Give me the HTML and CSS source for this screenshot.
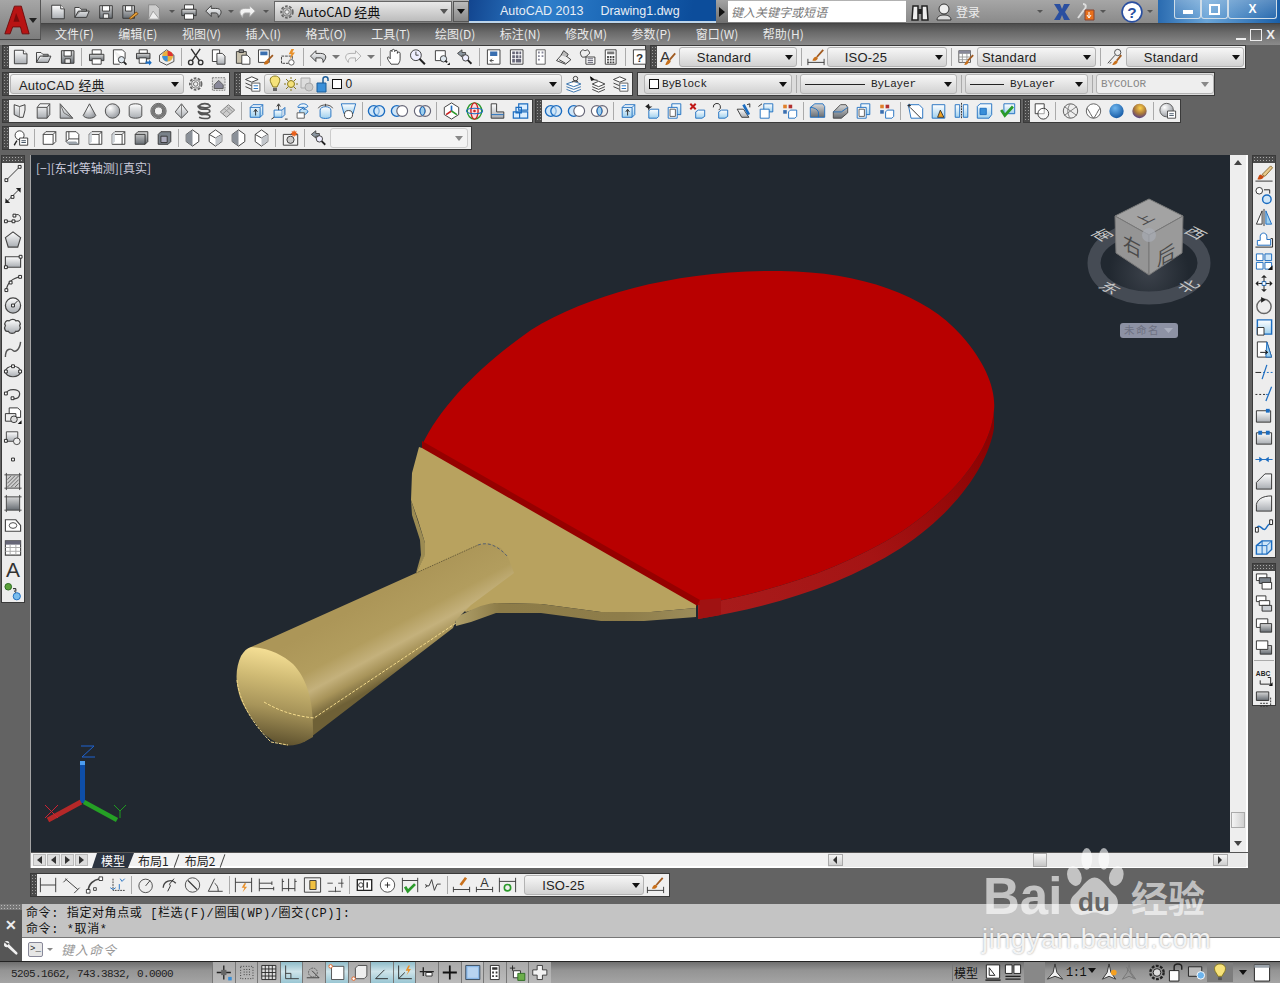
FILE: index.html
```html
<!DOCTYPE html>
<html lang="zh">
<head>
<meta charset="utf-8">
<title>AutoCAD 2013 - Drawing1.dwg</title>
<link rel="stylesheet" href="styles.css">
</head>
<body>
<svg class="defs" aria-hidden="true">
<defs>
<linearGradient id="gy" x1="0" y1="0" x2="0" y2="1"><stop offset="0" stop-color="#fff"/><stop offset="1" stop-color="#a9adb2"/></linearGradient>
<linearGradient id="gd" x1="0" y1="0" x2="0" y2="1"><stop offset="0" stop-color="#d8d8d8"/><stop offset="1" stop-color="#666c72"/></linearGradient>
<linearGradient id="gb" x1="0" y1="0" x2="0" y2="1"><stop offset="0" stop-color="#fff"/><stop offset="1" stop-color="#9fd0ee"/></linearGradient>
<radialGradient id="gs" cx=".35" cy=".3" r=".8"><stop offset="0" stop-color="#fff"/><stop offset="1" stop-color="#8f9399"/></radialGradient>
<radialGradient id="gbl" cx=".4" cy=".3" r=".8"><stop offset="0" stop-color="#6fb6ee"/><stop offset="1" stop-color="#0b4f9c"/></radialGradient>
<radialGradient id="gor" cx=".55" cy=".3" r=".8"><stop offset="0" stop-color="#ffd24a"/><stop offset=".5" stop-color="#a9783a"/><stop offset="1" stop-color="#3b2fa0"/></radialGradient>
<symbol id="new" viewBox="0 0 20 20"><path d="M3 2.5h10l4 4v11H3z" fill="url(#gy)" stroke="#333"/><path d="M13 2.500v4h4" fill="#fff" stroke="#333"/></symbol>
<symbol id="open" viewBox="0 0 20 20"><path d="M2 16V5h5l2 2h6v2H6L2 16h13l3-7H9" fill="url(#gy)" stroke="#333"/></symbol>
<symbol id="save" viewBox="0 0 20 20"><path d="M3 3h14v14H3z" fill="url(#gd)" stroke="#333"/><path d="M6 3h8v6H6z" fill="#fff" stroke="#333"/><path d="M7 12h6v5H7z" fill="#eee" stroke="#333"/></symbol>
<symbol id="saveas" viewBox="0 0 20 20"><path d="M2 3h13v14H2z" fill="url(#gd)" stroke="#333"/><path d="M5 3h7v6H5z" fill="#fff" stroke="#333"/><path d="M9 17l8-7 2 2-8 6z" fill="#e8a23a" stroke="#7a4a10"/></symbol>
<symbol id="sheet" viewBox="0 0 20 20"><path d="M4 2h8l4 4v12H4z" fill="#ccc" stroke="#888"/><path d="M4 18l5-9 7 9z" fill="#eee" stroke="#999"/></symbol>
<symbol id="print" viewBox="0 0 20 20"><path d="M5 2h10v5H5z" fill="#fff" stroke="#333"/><path d="M2 7h16v7H2z" fill="url(#gd)" stroke="#333"/><path d="M5 12h10v6H5z" fill="#fff" stroke="#333"/></symbol>
<symbol id="prev" viewBox="0 0 20 20"><path d="M3 2h10l3 3v7M3 2v16h7" fill="#fff" stroke="#333"/><circle cx="12" cy="13" r="3.500" fill="#dfe8ef" stroke="#333"/><path d="M14.500 15.500l3 3" stroke="#222" stroke-width="2"/></symbol>
<symbol id="pub" viewBox="0 0 20 20"><path d="M5 2h9v4H5z" fill="#fff" stroke="#333"/><path d="M2 6h15v6H2z" fill="url(#gd)" stroke="#333"/><path d="M5 11h8v6H5z" fill="#fff" stroke="#333"/><path d="M12 15h4v-2l3 3.500-3 3v-2h-4z" fill="#1b6cc0"/></symbol>
<symbol id="p3d" viewBox="0 0 20 20"><path d="M2 8l8-6 8 6v7l-8 4-8-4z" fill="#eee" stroke="#444"/><circle cx="11" cy="9" r="6" fill="#e8b040"/><path d="M11 3a6 6 0 0 1 6 6h-6z" fill="#d33"/><path d="M5 9a6 6 0 0 0 6 6V9z" fill="#3a8fd8"/></symbol>
<symbol id="cut" viewBox="0 0 20 20"><path d="M5 1l9 13M15 1L6 14" stroke="#333" stroke-width="1.600" fill="none"/><circle cx="4.500" cy="16" r="2.500" fill="none" stroke="#333" stroke-width="1.500"/><circle cx="15.500" cy="16" r="2.500" fill="none" stroke="#333" stroke-width="1.500"/></symbol>
<symbol id="copy" viewBox="0 0 20 20"><path d="M3 2h8v13H3z" fill="#fff" stroke="#333"/><path d="M8 6h6l3 3v9H8z" fill="url(#gy)" stroke="#333"/></symbol>
<symbol id="paste" viewBox="0 0 20 20"><path d="M3 4h11v13H3z" fill="#c9c2ae" stroke="#333"/><path d="M6 2h5v3H6z" fill="#888" stroke="#333"/><path d="M9 8h6l3 3v7H9z" fill="#fff" stroke="#333"/></symbol>
<symbol id="match" viewBox="0 0 20 20"><path d="M2 2h12v14H2z" fill="#fff" stroke="#333"/><path d="M4 4h8v4H4z" fill="#3a6fb0"/><path d="M18 8l-6 6" stroke="#a05a20" stroke-width="2"/><path d="M8 18c1-4 3-5 5-4l1 1c-1 3-3 4-6 3z" fill="#c8701c"/></symbol>
<symbol id="block" viewBox="0 0 20 20"><path d="M2 9h12v8H2z" fill="#eee" stroke="#333" stroke-dasharray="3 1"/><path d="M13 1l-3 6h3l-2 6 6-8h-3l2-4z" fill="#e8902a"/><circle cx="13" cy="16" r="3" fill="#fff" stroke="#555"/></symbol>
<symbol id="undo" viewBox="0 0 20 20"><path d="M8 3L2 9l6 6v-4h5c2 0 3 2 3 5 2-3 3-4 3-6 0-3-3-4-6-4H8z" fill="url(#gy)" stroke="#333"/></symbol>
<symbol id="redo" viewBox="0 0 20 20"><path d="M12 3l6 6-6 6v-4H7c-2 0-3 2-3 5-2-3-3-4-3-6 0-3 3-4 6-4h5z" fill="#f2f2f2" stroke="#aaa"/></symbol>
<symbol id="pan" viewBox="0 0 20 20"><path d="M6 18c-2-3-4-5-4-7s2-1 3 1V4c0-2 2-2 2 0V3c0-2 3-2 3 0v1c0-2 3-2 3 0v2c0-2 3-2 3 0v6c0 3-1 4-2 6z" fill="#fff" stroke="#333"/></symbol>
<symbol id="zrt" viewBox="0 0 20 20"><circle cx="8" cy="8" r="6" fill="#eef" stroke="#333"/><path d="M8 4v4h3" fill="none" stroke="#333"/><path d="M12 12l6 6" stroke="#222" stroke-width="2.200"/></symbol>
<symbol id="zw" viewBox="0 0 20 20"><path d="M3 3h11v11H3z" fill="#fff" stroke="#333"/><circle cx="12" cy="12" r="3.500" fill="#dfe8ef" stroke="#333"/><path d="M14 14l2 2" stroke="#222" stroke-width="2"/><path d="M16 19l3-3v3z" fill="#111"/></symbol>
<symbol id="zp" viewBox="0 0 20 20"><path d="M2 6l5-4v3h4v3H7v2z" fill="#8b96a0" stroke="#444"/><circle cx="11" cy="11" r="3.500" fill="#eef" stroke="#333"/><path d="M13.500 13.500l4 4" stroke="#222" stroke-width="2"/></symbol>
<symbol id="prop" viewBox="0 0 20 20"><path d="M3 2h14v16H3z" fill="#fff" stroke="#333"/><path d="M6 4h8v5H6z" fill="#3a6fb0"/><path d="M6 14h4M6 14l2-2M6 14l2 2" stroke="#333" fill="none"/></symbol>
<symbol id="grid" viewBox="0 0 20 20"><path d="M3 2h14v16H3z" fill="#fff" stroke="#333"/><path d="M5 4h3v3H5zM9 4h3v3H9zM13 4h2v3h-2zM5 8h3v3H5zM9 8h3v3H9zM13 8h2v3h-2zM9 12h6v4H9zM5 12h3v4H5z" fill="#667"/></symbol>
<symbol id="tp" viewBox="0 0 20 20"><path d="M5 2h10v16H5z" fill="#fff" stroke="#555"/><path d="M7 4h2v2H7zM11 4h2v2h-2zM7 8h2v2H7zM11 8h2v2h-2zM7 12h2v2H7z" fill="#889"/></symbol>
<symbol id="ssm" viewBox="0 0 20 20"><path d="M2 14l7-8 9 7-6 5z" fill="#eee" stroke="#333"/><path d="M5 13l7 4M7 8l3-5 5 4-2 3" fill="#bbb" stroke="#333"/></symbol>
<symbol id="mkup" viewBox="0 0 20 20"><path d="M3 3c2-2 3 0 4 0s3-2 4 0 2 3 0 4-2 3-4 3-3 1-4-1-2-4 0-6z" fill="#eee" stroke="#333"/><path d="M8 10h10v8H8z" fill="#fff" stroke="#333"/><path d="M10 12h6M10 14h6M10 16h6" stroke="#556"/></symbol>
<symbol id="calc" viewBox="0 0 20 20"><path d="M4 2h12v16H4z" fill="#fff" stroke="#333"/><path d="M6 4h8v3H6z" fill="#777"/><path d="M6 9h2v2H6zM9 9h2v2H9zM12 9h2v2h-2zM6 12h2v2H6zM9 12h2v2H9zM12 12h2v2h-2zM6 15h2v2H6zM9 15h2v2H9zM12 15h2v2h-2z" fill="#444"/></symbol>
<symbol id="help" viewBox="0 0 20 20"><path d="M3 2h14v16H3z" fill="#fff" stroke="#333"/><text x="10" y="15" font-size="13" font-weight="700" text-anchor="middle" font-family="Liberation Sans" fill="#333">?</text></symbol>
<symbol id="txt" viewBox="0 0 20 20"><text x="1" y="15" font-size="17" font-family="Liberation Sans" fill="#333">A</text><path d="M18 6l-6 7" stroke="#a05a20" stroke-width="2"/><path d="M7 19c1-4 3-6 5-6l1 1c0 3-3 5-6 5z" fill="#c8701c"/></symbol>
<symbol id="dims" viewBox="0 0 20 20"><path d="M1 12v7M19 12v7M1 16h18" stroke="#333" fill="none"/><path d="M18 2l-7 8" stroke="#a05a20" stroke-width="2"/><path d="M6 14c1-3 3-5 5-4l1 1c0 2-3 4-6 3z" fill="#c8701c"/></symbol>
<symbol id="tbl" viewBox="0 0 20 20"><path d="M2 3h13v13H2z" fill="#fff" stroke="#555"/><path d="M2 6h13M2 10h13M2 13h13M6 6v10M11 6v10" stroke="#999"/><path d="M2 3h13v3H2z" fill="#889"/><path d="M18 8l-6 6" stroke="#a05a20" stroke-width="2"/><path d="M8 19c1-3 3-5 4-5l1 1c0 2-2 4-5 4z" fill="#c8701c"/></symbol>
<symbol id="mld" viewBox="0 0 20 20"><circle cx="13" cy="5" r="3.500" fill="none" stroke="#444"/><path d="M10 8l-8 9M4 17l2-1" stroke="#444" fill="none"/><path d="M17 8l-5 6" stroke="#a05a20" stroke-width="2"/><path d="M7 19c1-3 3-5 5-5l1 1c0 2-3 4-6 4z" fill="#c8701c"/></symbol>
<symbol id="gear" viewBox="0 0 20 20"><circle cx="10" cy="10" r="6.500" fill="none" stroke="#666" stroke-width="2" stroke-dasharray="3 1.600"/><circle cx="10" cy="10" r="4.500" fill="none" stroke="#666"/><circle cx="10" cy="10" r="2.500" fill="#eee" stroke="#666"/></symbol>
<symbol id="wsl" viewBox="0 0 20 20"><path d="M3 3h14v14H3z" fill="#ddd" stroke="#777" stroke-dasharray="2 1"/><path d="M5 11l5-5 5 5v4H5z" fill="#889" stroke="#555"/></symbol>
<symbol id="lyr" viewBox="0 0 20 20"><path d="M2 5l7-3 7 3-7 3zM2 9l7 3M2 13l7 3" fill="#fff" stroke="#333"/><path d="M9 9h9v9H9z" fill="#fff" stroke="#555"/><path d="M11 12h5M11 15h5" stroke="#1b6cc0"/></symbol>
<symbol id="lyr2" viewBox="0 0 20 20"><path d="M2 10l8-3 8 3-8 3zM2 13l8 3 8-3M2 16l8 3 8-3" fill="#fff" stroke="#2a6aa8"/><circle cx="12" cy="4" r="2.500" fill="#eee" stroke="#333"/><path d="M8 8c1-2 6-2 7 0" fill="#888" stroke="#333"/></symbol>
<symbol id="lyr3" viewBox="0 0 20 20"><path d="M4 10l7-3 7 3-7 3zM4 13l7 3 7-3M4 16l7 3 7-3" fill="#fff" stroke="#333"/><path d="M2 2l4 3-3 1zM5 5l5 1" fill="#111" stroke="#111"/></symbol>
<symbol id="polys" viewBox="0 0 20 20"><path d="M3 3l6 2v12l-6-3z" fill="url(#gy)" stroke="#333"/><path d="M9 5l6-2v6l-2 8H9" fill="#eee" stroke="#333"/></symbol>
<symbol id="box" viewBox="0 0 20 20"><path d="M3 6l3-4h11v12l-3 4H3z" fill="url(#gy)" stroke="#444"/><path d="M3 6h11v12M14 6l3-4" fill="none" stroke="#444"/></symbol>
<symbol id="wedge" viewBox="0 0 20 20"><path d="M3 2v16h14z" fill="url(#gy)" stroke="#444"/><path d="M3 2l4 10 10 6" fill="none" stroke="#666"/></symbol>
<symbol id="cone" viewBox="0 0 20 20"><path d="M10 2L3 15c2 4 12 4 14 0z" fill="url(#gs)" stroke="#444"/></symbol>
<symbol id="sph" viewBox="0 0 20 20"><circle cx="10" cy="10" r="8" fill="url(#gs)" stroke="#444"/></symbol>
<symbol id="cyl" viewBox="0 0 20 20"><path d="M3 5c0-4 14-4 14 0v10c0 4-14 4-14 0z" fill="url(#gy)" stroke="#444"/></symbol>
<symbol id="tor" viewBox="0 0 20 20"><circle cx="10" cy="10" r="6.500" fill="none" stroke="#777" stroke-width="3"/><circle cx="10" cy="10" r="8.500" fill="none" stroke="#333" stroke-width=".8"/><circle cx="10" cy="10" r="4.500" fill="none" stroke="#333" stroke-width=".8"/></symbol>
<symbol id="pyr" viewBox="0 0 20 20"><path d="M10 2L3 11l7 7 7-7z" fill="url(#gy)" stroke="#444"/><path d="M10 2v16" stroke="#777"/></symbol>
<symbol id="hel" viewBox="0 0 20 20"><path d="M4 4c3-3 10-3 12 0s-9 3-12 1 0 3 3 3 9-1 9 2-10 3-12 1 0 3 3 3 9-1 9 2-8 3-12 1" fill="none" stroke="#555" stroke-width="1.800"/></symbol>
<symbol id="plane" viewBox="0 0 20 20"><path d="M2 11l9-8 7 6-9 8z" fill="#ccc" stroke="#777"/><path d="M6 7l7 6M9 5l7 6M5 13l8-7" stroke="#999" fill="none"/></symbol>
<symbol id="ext" viewBox="0 0 20 20"><path d="M3 6l3-3h11v11l-3 3H3z" fill="url(#gb)" stroke="#1b6cc0"/><path d="M3 6h11v11M14 6l3-3" fill="none" stroke="#1b6cc0"/><path d="M9 15V9M7 11l2-3 2 3" stroke="#222" fill="none"/></symbol>
<symbol id="pp" viewBox="0 0 20 20"><path d="M4 9h9v8H4z" fill="url(#gb)" stroke="#1b6cc0"/><path d="M13 9l3-3v8l-3 3" fill="#cde" stroke="#1b6cc0"/><path d="M9 9V3M7 5l2-3 2 3M1 19l3-2M16 19h3" stroke="#222" fill="none"/></symbol>
<symbol id="swp" viewBox="0 0 20 20"><path d="M5 5c2-4 10-4 11 0l-5 3c3 0 5 1 5 3l-3 3H7V9l5-3H5z" fill="url(#gb)" stroke="#1b6cc0"/><path d="M4 12h8v6H4z" fill="#fff" stroke="#555"/></symbol>
<symbol id="rev" viewBox="0 0 20 20"><path d="M4 9c0-5 12-5 12 0v7c0 3-12 3-12 0z" fill="url(#gb)" stroke="#1b6cc0"/><path d="M2 7c2-5 14-5 16 0M10 2v3" stroke="#444" fill="none"/></symbol>
<symbol id="loft" viewBox="0 0 20 20"><path d="M2 2h16l-3 11H5z" fill="url(#gb)" stroke="#1b6cc0"/><circle cx="10" cy="14" r="4.500" fill="#fff" stroke="#333"/></symbol>
<symbol id="u1" viewBox="0 0 20 20"><circle cx="7" cy="10" r="6" fill="#cfe6f8" stroke="#1b6cc0" stroke-width="1.500"/><circle cx="13" cy="10" r="6" fill="#cfe6f8" fill-opacity=".6" stroke="#1b6cc0" stroke-width="1.500"/></symbol>
<symbol id="u2" viewBox="0 0 20 20"><circle cx="7" cy="10" r="6" fill="#cfe6f8" stroke="#1b6cc0" stroke-width="1.500"/><circle cx="13" cy="10" r="6" fill="#fff" stroke="#667" stroke-width="1.300"/></symbol>
<symbol id="u3" viewBox="0 0 20 20"><circle cx="7" cy="10" r="6" fill="#fff" stroke="#667" stroke-width="1.300"/><circle cx="13" cy="10" r="6" fill="none" stroke="#667" stroke-width="1.300"/><path d="M10 5a6 6 0 0 1 0 10 6 6 0 0 1 0-10z" fill="#9fd0ee" stroke="#1b6cc0"/></symbol>
<symbol id="giz" viewBox="0 0 20 20"><path d="M10 1l8 5v8l-8 5-8-5V6z" fill="#fff" stroke="#333"/><path d="M10 10V4" stroke="#1b6cc0" stroke-width="1.800"/><path d="M10 10l-6 4" stroke="#c22" stroke-width="1.800"/><path d="M10 10l6 4" stroke="#2a9a2a" stroke-width="1.800"/></symbol>
<symbol id="orb" viewBox="0 0 20 20"><ellipse cx="10" cy="10" rx="8" ry="9" fill="none" stroke="#2a9a2a" stroke-width="1.500"/><ellipse cx="10" cy="10" rx="4" ry="9" fill="#fdd" stroke="#c22" stroke-width="1.500"/><ellipse cx="10" cy="10" rx="9" ry="3" fill="none" stroke="#1b6cc0" stroke-width="1.200"/><circle cx="10" cy="10" r="1.500" fill="#c22"/></symbol>
<symbol id="sec" viewBox="0 0 20 20"><path d="M3 2h6v9h8v7H3z" fill="url(#gy)" stroke="#333"/><path d="M3 14h14" stroke="#1b6cc0"/></symbol>
<symbol id="blu" viewBox="0 0 20 20"><path d="M8 2h10v7H8zM2 11h7v7H2zM9 11h9v7H9zM5 6h6v6H5z" fill="#dbeeff" stroke="#1b6cc0" stroke-width="1.300"/></symbol>
<symbol id="mv3" viewBox="0 0 20 20"><path d="M3 5l4-3 1 3 3 0-3 2-1 3-1-3z" fill="#222"/><path d="M7 10l2-2h9v8l-2 2H7z" fill="url(#gb)" stroke="#1b6cc0"/></symbol>
<symbol id="cp3" viewBox="0 0 20 20"><path d="M7 2h10v12H7z" fill="url(#gb)" stroke="#1b6cc0"/><path d="M3 6h10v12H3z" fill="#fff" stroke="#1b6cc0"/><path d="M5 8h6v8H5z" fill="#fff" stroke="#555"/></symbol>
<symbol id="er3" viewBox="0 0 20 20"><path d="M2 2l6 6M8 2L2 8" stroke="#c01818" stroke-width="2.200"/><path d="M8 11l3-2h7v7l-3 2H8z" fill="url(#gb)" stroke="#1b6cc0"/></symbol>
<symbol id="rt3" viewBox="0 0 20 20"><path d="M2 6a4 4 0 1 1 6 3" fill="none" stroke="#222"/><path d="M8 11l3-2h7v7l-3 2H8z" fill="url(#gb)" stroke="#1b6cc0"/></symbol>
<symbol id="sk3" viewBox="0 0 20 20"><path d="M3 8h7l6 9H8z" fill="url(#gy)" stroke="#333"/><path d="M10 3l6 11" stroke="#1b6cc0" stroke-width="3"/><path d="M14 3l3-1v4" stroke="#222" fill="none"/></symbol>
<symbol id="of3" viewBox="0 0 20 20"><path d="M7 2h10v9H7z" fill="url(#gb)" stroke="#1b6cc0"/><path d="M3 8h10v10H3z" fill="#fff" stroke="#1b6cc0"/><path d="M1 5l4-3" stroke="#222"/></symbol>
<symbol id="col3" viewBox="0 0 20 20"><path d="M3 3h4v4H3z" fill="#e0802a"/><path d="M9 3h4v4H9z" fill="#b03030"/><path d="M3 9h4v4H3z" fill="#3a6fb0"/><path d="M9 11l2-2h7v7l-2 2H9z" fill="#fff" stroke="#1b6cc0"/></symbol>
<symbol id="fil3" viewBox="0 0 20 20"><path d="M2 6l5-4h9l2 3v12H2z" fill="url(#gd)" stroke="#1b6cc0"/><path d="M2 6c4 0 8 2 9 5v6" fill="none" stroke="#1b6cc0"/></symbol>
<symbol id="cham3" viewBox="0 0 20 20"><path d="M2 11l8-8h6l2 3v6l-7 6H2z" fill="url(#gd)" stroke="#444"/><path d="M2 11h9l7-5" fill="none" stroke="#1b6cc0"/></symbol>
<symbol id="slc" viewBox="0 0 20 20"><path d="M2 3h12l4 4v11H5z" fill="#fff" stroke="#1b6cc0"/><path d="M4 6l12 12" stroke="#222"/><path d="M1 4h4M3 2v4" stroke="#222"/></symbol>
<symbol id="wr" viewBox="0 0 20 20"><path d="M3 3h14v15H3z" fill="url(#gb)" stroke="#1b6cc0"/><path d="M12 9l-3 8h7z" fill="#f0a020" stroke="#333"/></symbol>
<symbol id="sep3" viewBox="0 0 20 20"><path d="M3 3h5v14H3zM12 3h5v14h-5z" fill="url(#gb)" stroke="#1b6cc0"/><path d="M10 1v18" stroke="#222" stroke-dasharray="2 1"/></symbol>
<symbol id="she3" viewBox="0 0 20 20"><path d="M2 5l3-3h13v12l-3 4H2z" fill="url(#gb)" stroke="#1b6cc0"/><path d="M5 7h7v7H5z" fill="#3a8fd8" stroke="#1b6cc0"/></symbol>
<symbol id="chk3" viewBox="0 0 20 20"><path d="M6 2h12v11H6z" fill="url(#gb)" stroke="#1b6cc0"/><path d="M3 9l4 6 9-10" fill="none" stroke="#2a9a2a" stroke-width="3"/></symbol>
<symbol id="ovl" viewBox="0 0 20 20"><path d="M3 2h10v11H3z" fill="#fff" stroke="#333"/><circle cx="12" cy="13" r="6" fill="#fff" fill-opacity=".5" stroke="#333"/></symbol>
<symbol id="hid" viewBox="0 0 20 20"><circle cx="10" cy="10" r="8" fill="#eee" stroke="#555"/><path d="M3 5l14 10M17 5L3 15M10 2c-4 4-4 12 0 16" fill="none" stroke="#777"/></symbol>
<symbol id="hid2" viewBox="0 0 20 20"><circle cx="10" cy="10" r="8" fill="#fff" stroke="#555"/><path d="M3 7c3 4 4 8 7 11 3-3 4-7 7-11" fill="none" stroke="#555"/></symbol>
<symbol id="rbl" viewBox="0 0 20 20"><circle cx="10" cy="10" r="8" fill="url(#gbl)"/></symbol>
<symbol id="ror" viewBox="0 0 20 20"><circle cx="10" cy="10" r="8" fill="url(#gor)"/></symbol>
<symbol id="vsm" viewBox="0 0 20 20"><circle cx="9" cy="9" r="7.500" fill="url(#gs)" stroke="#555"/><path d="M10 10h9v8h-9z" fill="#fff" stroke="#444"/><path d="M12 13h5M12 15h5" stroke="#456"/></symbol>
<symbol id="lookup" viewBox="0 0 20 20"><circle cx="9" cy="7" r="5" fill="#fff" stroke="#333"/><path d="M6 13l-3 5M3 18l1-1" stroke="#222" stroke-width="1.500"/><path d="M9 10h9v8H9z" fill="#fff" stroke="#333"/><path d="M11 13h5M11 15h5" stroke="#345"/></symbol>
<symbol id="v1" viewBox="0 0 20 20"><path d="M3 6l3-3h11v11l-3 3H3z" fill="#fff" stroke="#333"/><path d="M3 6h11v11M14 6l3-3" fill="none" stroke="#333"/></symbol>
<symbol id="v2" viewBox="0 0 20 20"><path d="M3 3h11l3 3v11H6l-3-3z" fill="#fff" stroke="#333"/><path d="M3 14l3-3h11M6 11V3" fill="none" stroke="#333"/><path d="M3 14h11l3 3H6z" fill="#9ba3ab"/></symbol>
<symbol id="v3" viewBox="0 0 20 20"><path d="M6 3h11v14H3V6z" fill="#fff" stroke="#333"/><path d="M3 6h11v11M14 6l3-3" fill="none" stroke="#333"/><path d="M3 6l3-3v11l-3 3z" fill="#cfd4d9"/></symbol>
<symbol id="v4" viewBox="0 0 20 20"><path d="M3 6l3-3h11v11l-3 3H3z" fill="url(#gd)" stroke="#333"/><path d="M3 6h11v11" fill="none" stroke="#333"/></symbol>
<symbol id="v5" viewBox="0 0 20 20"><path d="M3 6l3-3h11v11l-3 3H3z" fill="#7a828a" stroke="#333"/><path d="M6 8h7v7H6z" fill="#aab" stroke="#333"/></symbol>
<symbol id="iso" viewBox="0 0 20 20"><path d="M10 1l7 5v8l-7 5-7-5V6z" fill="#fff" stroke="#333"/><path d="M10 1l-7 5 7 4zM10 10v9l-7-5V6z" fill="#8a9098"/></symbol>
<symbol id="iso2" viewBox="0 0 20 20"><path d="M10 1l7 5v8l-7 5-7-5V6z" fill="#fff" stroke="#333"/><path d="M3 6l7 4 7-4" fill="none" stroke="#333"/><path d="M10 10v9l7-5V6z" fill="#c2c6cb"/></symbol>
<symbol id="cam" viewBox="0 0 20 20"><path d="M2 6h16v12H2z" fill="#f2f2f2" stroke="#333"/><circle cx="10" cy="12" r="4" fill="#ccc" stroke="#333"/><path d="M14 1l1 2 2-1-1 2 2 1-2 1 1 2-2-1-1 2-1-2-2 1 1-2-2-1 2-1-1-2 2 1z" fill="#e8601c"/></symbol>
<symbol id="dl" viewBox="0 0 20 20"><path d="M1 2v16M18 2v16M1 10h17" stroke="#333" fill="none"/></symbol>
<symbol id="da" viewBox="0 0 20 20"><path d="M3 3L17 15M1 7l4-4M13 19l6-6" stroke="#333" fill="none"/></symbol>
<symbol id="darc" viewBox="0 0 20 20"><path d="M3 17C3 9 9 4 16 3" fill="none" stroke="#444" stroke-width="1.800"/><path d="M1 15h4v4H1zM15 1h4v4h-4zM9 13h3v3H9z" fill="#fff" stroke="#333"/></symbol>
<symbol id="dord" viewBox="0 0 20 20"><path d="M5 3v13h14" fill="none" stroke="#333" stroke-dasharray="2 1"/><path d="M2 13l3 2 3-2M13 3l2 3 3-3M12 15v-6" stroke="#1b6cc0" fill="none"/></symbol>
<symbol id="drad" viewBox="0 0 20 20"><circle cx="9" cy="11" r="7.500" fill="#eee" stroke="#444"/><path d="M9 11l5-6" stroke="#333"/></symbol>
<symbol id="djog" viewBox="0 0 20 20"><path d="M3 13A8 8 0 0 1 17 8" fill="none" stroke="#444" stroke-width="1.500"/><path d="M15 3l-5 6 1 2-3 6" stroke="#222" fill="none"/></symbol>
<symbol id="ddia" viewBox="0 0 20 20"><circle cx="10" cy="10" r="8" fill="#eee" stroke="#444"/><path d="M5 5l10 10" stroke="#333" stroke-width="1.200"/></symbol>
<symbol id="dang" viewBox="0 0 20 20"><path d="M2 17h16M2 17l7-14M13 17c0-4-1-7-4-9" fill="none" stroke="#333"/></symbol>
<symbol id="dq" viewBox="0 0 20 20"><path d="M1 2v16M19 2v16M1 7h18" stroke="#333" fill="none"/><path d="M11 8l-3 5h3l-2 5 5-6h-3l2-4z" fill="#e8902a"/></symbol>
<symbol id="dbase" viewBox="0 0 20 20"><path d="M2 3v14M2 8h14M2 14h16M16 6v4M18 12v4" stroke="#333" fill="none"/></symbol>
<symbol id="dcont" viewBox="0 0 20 20"><path d="M2 3v14M9 3v14M16 3v14M2 14h14M2 6h2M16 6h2" stroke="#333" fill="none"/></symbol>
<symbol id="dspc" viewBox="0 0 20 20"><path d="M1 2v16M19 2v16M1 2h18M1 18h18" stroke="#333" fill="none"/><path d="M7 5h7v10H7z" fill="#f0c040" stroke="#333"/></symbol>
<symbol id="dbrk" viewBox="0 0 20 20"><path d="M1 8h6M13 8h6M17 3v10M2 17h14M10 12v6" stroke="#444" fill="none"/></symbol>
<symbol id="dtol" viewBox="0 0 20 20"><path d="M2 4h16v12H2z" fill="#fff" stroke="#222" stroke-width="1.500"/><path d="M9 4v12" stroke="#222"/><circle cx="6" cy="10" r="2.500" fill="none" stroke="#222"/><path d="M13 7v6" stroke="#222" stroke-width="1.500"/></symbol>
<symbol id="dcen" viewBox="0 0 20 20"><circle cx="10" cy="10" r="8" fill="#fff" stroke="#444"/><path d="M7 10h6M10 7v6" stroke="#222"/></symbol>
<symbol id="dins" viewBox="0 0 20 20"><path d="M1 2v16M18 2v16M1 5h17" stroke="#333" fill="none"/><path d="M4 12l3 5 8-8" stroke="#2a9a2a" stroke-width="3" fill="none"/></symbol>
<symbol id="djl" viewBox="0 0 20 20"><path d="M1 11h4l3-7 3 12 3-7h4M1 9l2 2-2 2" fill="none" stroke="#333"/></symbol>
<symbol id="dedt" viewBox="0 0 20 20"><path d="M1 12v6M19 12v6M1 15h18" stroke="#333"/><path d="M15 2l-6 8" stroke="#c8701c" stroke-width="3"/></symbol>
<symbol id="dtxt" viewBox="0 0 20 20"><path d="M1 12v6M19 12v6M1 15h18" stroke="#333"/><text x="10" y="12" font-size="14" text-anchor="middle" font-family="Liberation Sans" fill="#333">A</text></symbol>
<symbol id="dupd" viewBox="0 0 20 20"><path d="M1 2v16M19 2v16M1 6h18" stroke="#333" fill="none"/><circle cx="10" cy="13" r="3.500" fill="none" stroke="#2a9a2a" stroke-width="1.800"/></symbol>
<symbol id="line" viewBox="0 0 20 20"><path d="M3 17L17 3" stroke="#333"/><path d="M1.500 15.500h3v3h-3zM15.500 1.500h3v3h-3z" fill="#fff" stroke="#222"/></symbol>
<symbol id="xl" viewBox="0 0 20 20"><path d="M2 18L18 2" stroke="#333"/><path d="M8 10h3v3H8z" fill="#fff" stroke="#222"/><path d="M2 18v-5l5 5zM18 2v5l-5-5z" fill="#222"/></symbol>
<symbol id="pl" viewBox="0 0 20 20"><path d="M3 14h11c4 0 5-3 3-6-2-2-4-1-6 0" fill="none" stroke="#333"/><path d="M1 12.500h3v3H1zM9 12.500h3v3H9zM10 6.500h3v3h-3z" fill="#fff" stroke="#222"/></symbol>
<symbol id="pgon" viewBox="0 0 20 20"><path d="M10 2l8 6-3 10H5L2 8z" fill="url(#gy)" stroke="#444" stroke-width="1.200"/></symbol>
<symbol id="rec" viewBox="0 0 20 20"><path d="M2 5h16v11H2z" fill="url(#gy)" stroke="#444" stroke-width="1.200"/><path d="M1 14.500h3v3H1zM16.500 3.500h3v3h-3z" fill="#fff" stroke="#222"/></symbol>
<symbol id="arc" viewBox="0 0 20 20"><path d="M3 17C4 9 10 4 18 3" fill="none" stroke="#444" stroke-width="1.300"/><path d="M1.500 15.500h3v3h-3zM6 7.500h3v3H6zM16 1.500h3v3h-3z" fill="#fff" stroke="#222"/></symbol>
<symbol id="cir" viewBox="0 0 20 20"><circle cx="10" cy="10" r="8" fill="url(#gy)" stroke="#444" stroke-width="1.300"/><path d="M10 10l5-5" stroke="#333"/><path d="M8.500 8.500h3v3h-3z" fill="#fff" stroke="#222"/></symbol>
<symbol id="cld" viewBox="0 0 20 20"><path d="M6 3c2-2 6-2 7 0 3-1 6 2 4 5 2 3-1 7-4 6-2 3-6 3-8 0-3 1-5-3-3-6-2-3 1-6 4-5z" fill="url(#gy)" stroke="#444" stroke-width="1.300"/></symbol>
<symbol id="spl" viewBox="0 0 20 20"><path d="M2 18C2 8 8 9 10 11s7 0 8-9" fill="none" stroke="#555" stroke-width="1.500"/></symbol>
<symbol id="ell" viewBox="0 0 20 20"><ellipse cx="10" cy="10" rx="8" ry="5.500" fill="url(#gy)" stroke="#444" stroke-width="1.200"/><path d="M1 8.500h3v3H1zM16 8.500h3v3h-3zM8.500 3h3v3h-3z" fill="#fff" stroke="#222"/></symbol>
<symbol id="ela" viewBox="0 0 20 20"><path d="M3 10c0-5 14-6 14 0s-6 6-8 5" fill="none" stroke="#444" stroke-width="1.300"/><path d="M1 8.500h3v3H1zM8 13.500h3v3H8z" fill="#fff" stroke="#222"/></symbol>
<symbol id="ins" viewBox="0 0 20 20"><path d="M6 2h9l3 3v7H6z" fill="#fff" stroke="#333"/><path d="M2 8h11v8H2z" fill="#eee" stroke="#333"/><circle cx="11" cy="14" r="3.500" fill="#ddd" stroke="#333"/><path d="M15 19l4-4v4z" fill="#111"/></symbol>
<symbol id="mkb" viewBox="0 0 20 20"><path d="M3 4h12v10H3z" fill="url(#gy)" stroke="#444"/><circle cx="14" cy="14" r="3.500" fill="#eee" stroke="#444"/><path d="M1 12h3v3H1z" fill="#fff" stroke="#222"/></symbol>
<symbol id="pt" viewBox="0 0 20 20"><path d="M8.500 8.500h3v3h-3z" fill="#fff" stroke="#222"/></symbol>
<symbol id="hat" viewBox="0 0 20 20"><path d="M3 3h14v14H3z" fill="#ccc"/><path d="M1 3h18M1 17h18M3 1v18M17 1v18" stroke="#444"/><path d="M4 8l4-4M4 12l8-8M4 16l12-12M8 16l8-8M12 16l4-4" stroke="#666"/></symbol>
<symbol id="gra" viewBox="0 0 20 20"><path d="M3 3h14v14H3z" fill="url(#gd)"/><path d="M1 3h18M1 17h18M3 1v18M17 1v18" stroke="#444"/></symbol>
<symbol id="regn" viewBox="0 0 20 20"><path d="M2 4h11l5 6v6H2z" fill="#fff" stroke="#444" stroke-width="1.200"/><ellipse cx="10" cy="10" rx="4" ry="3" fill="#fff" stroke="#444"/></symbol>
<symbol id="table" viewBox="0 0 20 20"><path d="M2 3h16v15H2z" fill="#fff" stroke="#444" stroke-width="1.200"/><path d="M2 3h16v4H2z" fill="#667"/><path d="M2 10h16M2 14h16M7 7v11M13 7v11" stroke="#aaa"/></symbol>
<symbol id="mtxt" viewBox="0 0 20 20"><text x="10" y="18" font-size="22" text-anchor="middle" font-family="Liberation Sans" fill="#333">A</text></symbol>
<symbol id="addsel" viewBox="0 0 20 20"><circle cx="5" cy="5" r="3.500" fill="#5aa03a" stroke="#2a6a20"/><circle cx="14" cy="15" r="3.800" fill="#7bbcec" stroke="#1b6cc0"/><path d="M10 7h3v3M11 9l2 2" stroke="#111" fill="none"/></symbol>
<symbol id="erase" viewBox="0 0 20 20"><path d="M17 2l2 2-8 9-3-2z" fill="#e8c88a" stroke="#8a6a30"/><path d="M6 11c-2 1-2 4-3 5 3 1 6 0 7-3z" fill="#c84a10"/><path d="M1 18h18" stroke="#333"/></symbol>
<symbol id="copy2" viewBox="0 0 20 20"><circle cx="5" cy="5" r="3.500" fill="#fff" stroke="#333"/><circle cx="13" cy="14" r="4.500" fill="#cfe6f8" stroke="#1b6cc0" stroke-width="1.500"/><path d="M10 4h6v4" stroke="#222" fill="none"/></symbol>
<symbol id="mir" viewBox="0 0 20 20"><path d="M8 3v14H2z" fill="#fff" stroke="#333"/><path d="M12 3v14h6z" fill="#9fd0ee" stroke="#1b6cc0"/><path d="M10 1v18" stroke="#333"/></symbol>
<symbol id="off" viewBox="0 0 20 20"><path d="M3 16V11h3V7c0-5 7-5 7 0v3h4v6z" fill="#fff" stroke="#1b6cc0"/><path d="M1 18h18V9h-2" fill="none" stroke="#222"/></symbol>
<symbol id="arr" viewBox="0 0 20 20"><path d="M2 2h7v7H2zM2 11h7v7H2z" fill="#fff" stroke="#1b6cc0"/><path d="M11 2h7v7h-7z" fill="#cfe6f8" stroke="#1b6cc0"/><path d="M11 11h7v7h-7z" fill="#fff" stroke="#1b6cc0"/><path d="M14 19l5-5v5z" fill="#111"/></symbol>
<symbol id="mov" viewBox="0 0 20 20"><path d="M10 1l3 3h-6zM10 19l-3-3h6zM1 10l3-3v6zM19 10l-3 3v-6z" fill="#222"/><path d="M8 8h4v4H8z" fill="#fff" stroke="#1b6cc0"/><path d="M4 10h4M12 10h4M10 4v4M10 12v4" stroke="#222"/></symbol>
<symbol id="rot" viewBox="0 0 20 20"><circle cx="10" cy="11" r="7.500" fill="none" stroke="#666" stroke-width="1.500"/><path d="M7 1l5 3-5 3z" fill="#222"/></symbol>
<symbol id="sca" viewBox="0 0 20 20"><path d="M3 2h15v15H3z" fill="url(#gb)" stroke="#1b6cc0" stroke-width="1.500"/><path d="M3 10h7v8H3z" fill="#fff" stroke="#333"/></symbol>
<symbol id="str" viewBox="0 0 20 20"><path d="M3 2h10l5 16H3z" fill="#fff" stroke="#333"/><path d="M13 2l5 16h-6z" fill="#9fd0ee" stroke="#1b6cc0"/><path d="M6 13h7M11 11l3 2-3 2" stroke="#111" fill="none"/></symbol>
<symbol id="trim" viewBox="0 0 20 20"><path d="M1 11h6" stroke="#222"/><path d="M9 11h2M13 11h2M17 11h2" stroke="#1b6cc0"/><path d="M8 18l5-15" stroke="#1b6cc0" stroke-width="1.300"/></symbol>
<symbol id="ext2" viewBox="0 0 20 20"><path d="M1 11h2M5 11h2M9 11h2" stroke="#222"/><path d="M12 11h2" stroke="#1b6cc0"/><path d="M12 18l6-15" stroke="#1b6cc0" stroke-width="1.300"/></symbol>
<symbol id="bk1" viewBox="0 0 20 20"><path d="M2 5h15v12H2z" fill="url(#gy)" stroke="#333"/><path d="M12 3h4v4h-4z" fill="#1b6cc0"/></symbol>
<symbol id="bk2" viewBox="0 0 20 20"><path d="M2 5h16v12H2z" fill="url(#gy)" stroke="#333"/><path d="M4 3h4v4H4zM12 3h4v4h-4z" fill="#1b6cc0"/></symbol>
<symbol id="join" viewBox="0 0 20 20"><path d="M1 10h18" stroke="#1b6cc0"/><path d="M5 7l4 3-4 3zM15 7l-4 3 4 3z" fill="#1b6cc0"/></symbol>
<symbol id="cha" viewBox="0 0 20 20"><path d="M2 11l9-9h7v16H2z" fill="url(#gy)" stroke="#333"/></symbol>
<symbol id="fil" viewBox="0 0 20 20"><path d="M2 11C3 6 8 2 18 2v16H2z" fill="url(#gy)" stroke="#333"/></symbol>
<symbol id="bln" viewBox="0 0 20 20"><path d="M2 14c3-9 7 4 10-1s3-4 6-6" fill="none" stroke="#1b6cc0" stroke-width="1.500"/><path d="M1 12h3v5H1zM16 4h3v5h-3z" fill="#fff" stroke="#222"/></symbol>
<symbol id="exp" viewBox="0 0 20 20"><path d="M2 8l6-5h10v9l-5 5H2z" fill="#cfe6f8" stroke="#1b6cc0" stroke-width="1.500"/><path d="M2 8h11v9M13 8l5-5M8 3v14" fill="none" stroke="#1b6cc0"/></symbol>
<symbol id="d1" viewBox="0 0 20 20"><path d="M2 2h11v7H2z" fill="#fff" stroke="#333"/><path d="M5 6h12v6H5z" fill="#7a828a" stroke="#333"/><path d="M8 11h10v7H8z" fill="#fff" stroke="#333"/></symbol>
<symbol id="d2" viewBox="0 0 20 20"><path d="M2 2h10v6H2z" fill="#fff" stroke="#333"/><path d="M5 7h11v5H5z" fill="#fff" stroke="#333"/><path d="M8 12h10v6H8z" fill="#c9cdd2" stroke="#333"/></symbol>
<symbol id="d3" viewBox="0 0 20 20"><path d="M2 3h12v9H2z" fill="#fff" stroke="#333"/><path d="M6 8h12v9H6z" fill="url(#gd)" stroke="#333"/></symbol>
<symbol id="d4" viewBox="0 0 20 20"><path d="M6 8h12v9H6z" fill="url(#gd)" stroke="#333"/><path d="M2 3h12v9H2z" fill="#fff" stroke="#333"/></symbol>
<symbol id="abc" viewBox="0 0 20 20"><text x="9" y="8" font-size="7" text-anchor="middle" font-family="Liberation Sans" font-weight="700" fill="#222">ABC</text><path d="M14 10h3v7H6v-4" fill="none" stroke="#222"/><path d="M15 19l4-4v4z" fill="#111"/></symbol>
<symbol id="drw" viewBox="0 0 20 20"><path d="M2 2h13v9H2z" fill="url(#gd)" stroke="#333"/><path d="M6 14h8M6 17h8M17 8v9" stroke="#333" stroke-dasharray="2 1"/></symbol>
</defs>
</svg>

<header class="titlebar">
  <div class="appbtn"><svg viewBox="0 0 30 34" class="applogo"><path d="M12 1h8l9 32h-8l-2-8H10l-3 8H1z" fill="#b81414" stroke="#6a0808"/><path d="M14 9l-3 10h7z" fill="#7a0c0c"/></svg><span class="appdd"></span></div>
  <div class="qat">
    <svg class="b"><use href="#new"/></svg><svg class="b"><use href="#open"/></svg><svg class="b"><use href="#save"/></svg><svg class="b"><use href="#saveas"/></svg><svg class="b"><use href="#sheet"/></svg><i class="dd gr"></i>
    <svg class="b"><use href="#print"/></svg><svg class="b"><use href="#undo"/></svg><i class="dd gr"></i><svg class="b"><use href="#redo"/></svg><i class="dd gr"></i>
  </div>
  <div class="wscombo"><svg class="wsgear"><use href="#gear"/></svg><span>AutoCAD 经典</span><i class="dd"></i></div>
  <div class="tarrow"><i class="dd bk"></i></div>
  <div class="glass"><span>AutoCAD 2013</span><span>Drawing1.dwg</span></div>
  <div class="tarrow2"></div>
  <div class="search">键入关键字或短语</div>
  <div class="infocenter">
    <svg class="ib" viewBox="0 0 20 20"><path d="M3 4h5v14H2zM12 4h5l1 14h-6z" fill="#eee" stroke="#222" stroke-width="1.500"/><path d="M8 7h4v5H8z" fill="#222"/></svg>
    <svg class="ib" viewBox="0 0 20 20"><circle cx="10" cy="7" r="5" fill="#eee" stroke="#333"/><path d="M3 18c0-4 4-5 7-5s7 1 7 5z" fill="#ddd" stroke="#333"/></svg>
    <span class="login">登录</span>
    <i class="dd gr d1"></i>
    <svg class="ib x1" viewBox="0 0 20 20"><path d="M2 2h6l2 5 2-5h6l-5 8 5 8h-6l-2-5-2 5H2l5-8z" fill="#2a4fa0"/></svg>
    <svg class="ib" viewBox="0 0 20 20"><path d="M7 2c3 0 4 3 1 6l-6 8" fill="none" stroke="#ddd" stroke-width="2"/><path d="M9 8h9v10H9z" fill="#e8701c" stroke="#843"/><path d="M13 10v5M11 13l2 3 2-3" stroke="#fff" fill="none"/></svg>
    <i class="dd gr"></i>
    <svg class="ib hp" viewBox="0 0 20 20"><circle cx="10" cy="10" r="9" fill="#fff" stroke="#2a4fa0" stroke-width="1.500"/><text x="10" y="15" font-size="14" font-weight="700" text-anchor="middle" font-family="Liberation Sans" fill="#2a4fa0">?</text></svg>
    <i class="dd gr"></i>
  </div>
  <div class="winctl"><b class="wb"><i class="wmin"></i></b><b class="wb"><i class="wmax"></i></b><b class="wb wx">X</b></div>
</header>

<nav class="menubar">
  <span>文件(F)</span><span>编辑(E)</span><span>视图(V)</span><span>插入(I)</span><span>格式(O)</span><span>工具(T)</span><span>绘图(D)</span><span>标注(N)</span><span>修改(M)</span><span>参数(P)</span><span>窗口(W)</span><span>帮助(H)</span>
  <div class="mdi"><i class="mmin"></i><i class="mmax"></i><b>X</b></div>
</nav>

<section class="rows">
  <div class="row">
    <div class="tb w644">
      <svg class="b"><use href="#new"/></svg><svg class="b"><use href="#open"/></svg><svg class="b"><use href="#save"/></svg><u></u>
      <svg class="b"><use href="#print"/></svg><svg class="b"><use href="#prev"/></svg><svg class="b"><use href="#pub"/></svg><svg class="b"><use href="#p3d"/></svg><u></u>
      <svg class="b"><use href="#cut"/></svg><svg class="b"><use href="#copy"/></svg><svg class="b"><use href="#paste"/></svg><svg class="b"><use href="#match"/></svg><svg class="b"><use href="#block"/></svg><u></u>
      <svg class="b"><use href="#undo"/></svg><i class="dd sm"></i><svg class="b"><use href="#redo"/></svg><i class="dd sm gr"></i><u></u>
      <svg class="b"><use href="#pan"/></svg><svg class="b"><use href="#zrt"/></svg><svg class="b"><use href="#zw"/></svg><svg class="b"><use href="#zp"/></svg><u></u>
      <svg class="b"><use href="#prop"/></svg><svg class="b"><use href="#grid"/></svg><svg class="b"><use href="#tp"/></svg><svg class="b"><use href="#ssm"/></svg><svg class="b"><use href="#mkup"/></svg><svg class="b"><use href="#calc"/></svg><u></u>
      <svg class="b"><use href="#help"/></svg>
    </div>
    <div class="tb w596 cmbs">
      <svg class="b"><use href="#txt"/></svg><div class="cb c118 ctr">Standard<i class="dd"></i></div>
      <u></u><svg class="b"><use href="#dims"/></svg><div class="cb c120 ctr isoc">ISO-25<i class="dd"></i></div>
      <u></u><svg class="b"><use href="#tbl"/></svg><div class="cb c119">Standard<i class="dd"></i></div>
      <u></u><svg class="b"><use href="#mld"/></svg><div class="cb c118 ctr">Standard<i class="dd"></i></div>
    </div>
  </div>
  <div class="row">
    <div class="tb w228">
      <div class="cb c174">AutoCAD 经典<i class="dd"></i></div>
      <svg class="b"><use href="#gear"/></svg><svg class="b"><use href="#wsl"/></svg>
    </div>
    <div class="tb w399">
      <svg class="b"><use href="#lyr"/></svg>
      <div class="cb c298 lay">
        <svg class="s" viewBox="0 0 14 18"><path d="M7 1c4 0 6 3 4 7l-2 4H5L3 8C1 4 3 1 7 1z" fill="#f5e27a" stroke="#887a20"/><path d="M5 13h4v3H5z" fill="#666"/></svg>
        <svg class="s" viewBox="0 0 14 18"><circle cx="7" cy="9" r="3.500" fill="#f5e27a" stroke="#887a20"/><path d="M7 2v2M7 14v2M0 9h2M12 9h2M2 4l2 2M10 12l2 2M12 4l-2 2M2 14l2-2" stroke="#887a20"/></svg>
        <svg class="s" viewBox="0 0 14 18"><path d="M1 3h9v10H1z" fill="#ddd" stroke="#aaa"/><circle cx="9" cy="12" r="4" fill="#ccc" stroke="#aaa"/></svg>
        <svg class="s" viewBox="0 0 14 18"><path d="M1 8h9v9H1z" fill="#3a8fd8" stroke="#1b5c98"/><path d="M7 8V4c0-3 5-3 5 0v2" fill="none" stroke="#1b5c98" stroke-width="1.500"/></svg>
        <i class="sw"></i><span>0</span><i class="dd"></i>
      </div>
      <svg class="b"><use href="#lyr2"/></svg><svg class="b"><use href="#lyr3"/></svg><svg class="b"><use href="#lyr"/></svg>
    </div>
    <div class="tb w574 nohandle cprops">
      <div class="cb c148 ser"><i class="sw sm2"></i>ByBlock<i class="dd"></i></div><u></u>
      <div class="cb c157 ser"><i class="lt lt1"></i>ByLayer<i class="dd"></i></div><u></u>
      <div class="cb c123 ser"><i class="lt lt2"></i>ByLayer<i class="dd"></i></div><u></u>
      <div class="cb c118 ser dis">BYCOLOR<i class="dd gr"></i></div>
    </div>
  </div>
  <div class="row r3">
    <div class="tb w531">
      <svg class="b"><use href="#polys"/></svg><svg class="b"><use href="#box"/></svg><svg class="b"><use href="#wedge"/></svg><svg class="b"><use href="#cone"/></svg><svg class="b"><use href="#sph"/></svg><svg class="b"><use href="#cyl"/></svg><svg class="b"><use href="#tor"/></svg><svg class="b"><use href="#pyr"/></svg><svg class="b"><use href="#hel"/></svg><svg class="b"><use href="#plane"/></svg><u></u>
      <svg class="b"><use href="#ext"/></svg><svg class="b"><use href="#pp"/></svg><svg class="b"><use href="#swp"/></svg><svg class="b"><use href="#rev"/></svg><svg class="b"><use href="#loft"/></svg><u></u>
      <svg class="b"><use href="#u1"/></svg><svg class="b"><use href="#u2"/></svg><svg class="b"><use href="#u3"/></svg><u></u>
      <svg class="b"><use href="#giz"/></svg><svg class="b"><use href="#orb"/></svg><svg class="b"><use href="#sec"/></svg><svg class="b"><use href="#blu"/></svg>
    </div>
    <div class="tb w486">
      <svg class="b"><use href="#u1"/></svg><svg class="b"><use href="#u2"/></svg><svg class="b"><use href="#u3"/></svg><u></u>
      <svg class="b"><use href="#ext"/></svg><svg class="b"><use href="#mv3"/></svg><svg class="b"><use href="#cp3"/></svg><svg class="b"><use href="#er3"/></svg><svg class="b"><use href="#rt3"/></svg><svg class="b"><use href="#sk3"/></svg><svg class="b"><use href="#of3"/></svg><svg class="b"><use href="#col3"/></svg><u></u>
      <svg class="b"><use href="#fil3"/></svg><svg class="b"><use href="#cham3"/></svg><svg class="b"><use href="#cp3"/></svg><svg class="b"><use href="#col3"/></svg><u></u>
      <svg class="b"><use href="#slc"/></svg><svg class="b"><use href="#wr"/></svg><svg class="b"><use href="#sep3"/></svg><svg class="b"><use href="#she3"/></svg><svg class="b"><use href="#chk3"/></svg>
    </div>
    <div class="tb w158">
      <svg class="b"><use href="#ovl"/></svg><u></u><svg class="b"><use href="#hid"/></svg><svg class="b"><use href="#hid2"/></svg><svg class="b"><use href="#rbl"/></svg><svg class="b"><use href="#ror"/></svg><u></u><svg class="b"><use href="#vsm"/></svg>
    </div>
  </div>
  <div class="row r3">
    <div class="tb w470">
      <svg class="b"><use href="#lookup"/></svg><u></u>
      <svg class="b"><use href="#v1"/></svg><svg class="b"><use href="#v2"/></svg><svg class="b"><use href="#v3"/></svg><svg class="b"><use href="#v3"/></svg><svg class="b"><use href="#v4"/></svg><svg class="b"><use href="#v5"/></svg><u></u>
      <svg class="b"><use href="#iso"/></svg><svg class="b"><use href="#iso2"/></svg><svg class="b"><use href="#iso"/></svg><svg class="b"><use href="#iso2"/></svg><u></u>
      <svg class="b"><use href="#cam"/></svg><u></u><svg class="b"><use href="#zp"/></svg>
      <div class="cb c138 flat"><i class="dd gr"></i></div>
    </div>
  </div>
</section>

<main class="main">
  <aside class="vt vtl">
    <svg class="b"><use href="#line"/></svg><svg class="b"><use href="#xl"/></svg><svg class="b"><use href="#pl"/></svg><svg class="b"><use href="#pgon"/></svg><svg class="b"><use href="#rec"/></svg><svg class="b"><use href="#arc"/></svg><svg class="b"><use href="#cir"/></svg><svg class="b"><use href="#cld"/></svg><svg class="b"><use href="#spl"/></svg><svg class="b"><use href="#ell"/></svg><svg class="b"><use href="#ela"/></svg><svg class="b"><use href="#ins"/></svg><svg class="b"><use href="#mkb"/></svg><svg class="b"><use href="#pt"/></svg><svg class="b"><use href="#hat"/></svg><svg class="b"><use href="#gra"/></svg><svg class="b"><use href="#regn"/></svg><svg class="b"><use href="#table"/></svg><svg class="b"><use href="#mtxt"/></svg><svg class="b"><use href="#addsel"/></svg>
  </aside>
  <div class="center">
    <div class="viewrow">
      <svg class="canvas" viewBox="30 155 1199 697">
        <defs>
          <linearGradient id="rim" gradientUnits="userSpaceOnUse" x1="697" y1="610" x2="993" y2="420"><stop offset="0" stop-color="#a81c1c"/><stop offset=".5" stop-color="#a51414"/><stop offset="1" stop-color="#8a0000"/></linearGradient>
          <linearGradient id="hdl" gradientUnits="userSpaceOnUse" x1="345" y1="612" x2="395" y2="705"><stop offset="0" stop-color="#ac9658"/><stop offset=".33" stop-color="#b29d5e"/><stop offset=".5" stop-color="#c4b17c"/><stop offset=".62" stop-color="#a8945a"/><stop offset=".76" stop-color="#6e6036"/></linearGradient>
          <linearGradient id="capg" gradientUnits="userSpaceOnUse" x1="278" y1="650" x2="262" y2="745"><stop offset="0" stop-color="#f6e096"/><stop offset=".3" stop-color="#cfba74"/><stop offset=".6" stop-color="#a8955a"/><stop offset="1" stop-color="#574b2a"/></linearGradient>
          <linearGradient id="edge" gradientUnits="userSpaceOnUse" x1="455" y1="615" x2="695" y2="615"><stop offset="0" stop-color="#b0a06a"/><stop offset=".18" stop-color="#8d7c48"/><stop offset=".7" stop-color="#8e7d4a"/><stop offset="1" stop-color="#9c8c5a"/></linearGradient>
          <radialGradient id="vg" gradientUnits="userSpaceOnUse" cx="1148" cy="272" r="40"><stop offset="0" stop-color="#3c424b"/><stop offset="1" stop-color="#212830"/></radialGradient>
        </defs>
        <text x="35" y="173" class="vlabel">[−][东北等轴测][真实]</text>
        <path d="M697 605C770 592 840 570 900 532 955 495 990 450 993 410L993 428C988 462 958 510 900 548 840 586 770 607 697 619Z" fill="url(#rim)"/>
        <path d="M421 445C440 405 480 365 530 330 590 293 680 270 780 271 860 272 925 295 960 335 985 363 995 390 993 410 990 450 955 495 900 532 840 570 770 592 697 605Z" fill="#b80000"/>
        <path d="M421 441L699 600 695 607 421 449Z" fill="#960000"/>
        <path d="M699 600L720 598V615L697 619Z" fill="#a01212"/>
        <path d="M410 500L424 543 424 556 415 573 420 555 419 540 411 515Z" fill="#9c8b52"/>
        <path d="M418 447L421 448 695 605V608L650 612 600 612 540 604 495 603 465 612 415 573 424 555 424 543 417 520 410 500 411 473Z" fill="#b8a25f"/>
        <path d="M454 618C470 610 480 604 495 603L540 604 600 612 650 612 695 608V617L643 621 600 621 540 613 495 613 470 622 455 626Z" fill="url(#edge)"/>
        <path d="M250 647L415 573 477 545 488 543 500 548 507 557 513 573 470 605 455 620 452 628 310 737 303 742 270 700Z" fill="url(#hdl)"/>
        <path d="M250 647C268 648 282 655 292 664 305 678 313 698 312 737L303 742C295 746 285 747 277 743 268 739 262 733 258 728 248 714 240 705 237 690 234 675 236 665 240 656 243 651 246 648 250 647Z" fill="url(#capg)"/>
        <path d="M263 702C280 712 295 716 313 718L455 623" fill="none" stroke="#f5dc8c" stroke-dasharray="3 1.500"/>
        <path d="M415 573L477 545" fill="none" stroke="#6a5e3a" stroke-dasharray="1.500 1"/>
        <path d="M477 545C488 541 498 547 507 557" fill="none" stroke="#556070" stroke-dasharray="3 2"/>
        <path d="M236 680C238 700 250 722 270 742L287 745" fill="none" stroke="#f0d78a" stroke-dasharray="3 1"/>
        <ellipse cx="1148" cy="263" rx="55" ry="35" fill="url(#vg)" stroke="#454b54" stroke-width="13"/>
        <path d="M1148 199L1182 216 1148 235 1114 216Z" fill="#a3a3a3" stroke="#7a7a7a"/>
        <path d="M1114 216L1148 235V275L1115 253Z" fill="#959595" stroke="#777"/>
        <path d="M1182 216L1148 235V275L1181 253Z" fill="#9a9a9a" stroke="#777"/>
        <circle cx="1148" cy="235" r="7" fill="#a8adb5" opacity=".7"/>
        <text class="cube" transform="matrix(.9 -.45 .9 .45 1148 222)" text-anchor="middle">上</text>
        <text class="cube big" transform="matrix(.95 .5 0 1 1131 253)" text-anchor="middle">右</text>
        <text class="cube big" transform="matrix(.95 -.5 0 1 1165 262)" text-anchor="middle">后</text>
        <text class="ringt" transform="matrix(1 .5 -.8 .5 1104 291)" text-anchor="middle">东</text>
        <text class="ringt" transform="matrix(1 -.5 .8 .5 1192 289)" text-anchor="middle">北</text>
        <text class="ringt" transform="matrix(1 -.5 .8 .5 1106 238)" text-anchor="middle">南</text>
        <text class="ringt" transform="matrix(1 .5 -.8 .5 1190 236)" text-anchor="middle">西</text>
        <rect x="1119" y="323" width="58" height="15" rx="3" fill="#8d92a4"/>
        <text x="1123" y="334" class="unnamed">未命名</text>
        <path d="M1163 328h9l-4.500 5z" fill="#a9aebd"/>
        <path d="M80 746h13L81 757h13" fill="none" stroke="#1f63d0"/>
        <path d="M81.500 761V803" stroke="#0e4ea8" stroke-width="5"/>
        <path d="M80 802L47 820" stroke="#b52828" stroke-width="5"/>
        <path d="M83 802L116 820" stroke="#25a025" stroke-width="4.500"/>
        <path d="M79 761h5v4h-5z" fill="#4d9df0"/>
        <path d="M44 805l13 13M57 805l-13 13" stroke="#c23" fill="none"/>
        <path d="M113 805l6 6 6-6M119 811v7" stroke="#1f9a1f" fill="none"/>
      </svg>
      <div class="vscroll"><i class="tri up"></i><i class="vthumb"></i><i class="tri dn"></i></div>
    </div>
    <div class="tabbar">
      <div class="nav"><i class="na l1"></i><i class="na l2"></i><i class="na r2"></i><i class="na r1"></i></div>
      <span class="tab on">模型</span><span class="tab">布局1</span><span class="tab">布局2</span>
      <div class="hs"><i class="hbtn l"></i><i class="hthumb"></i><i class="hbtn r"></i></div>
    </div>
  </div>
  <aside class="rcol">
    <div class="vt vtr1">
      <svg class="b"><use href="#erase"/></svg><svg class="b"><use href="#copy2"/></svg><svg class="b"><use href="#mir"/></svg><svg class="b"><use href="#off"/></svg><svg class="b"><use href="#arr"/></svg><svg class="b"><use href="#mov"/></svg><svg class="b"><use href="#rot"/></svg><svg class="b"><use href="#sca"/></svg><svg class="b"><use href="#str"/></svg><svg class="b"><use href="#trim"/></svg><svg class="b"><use href="#ext2"/></svg><svg class="b"><use href="#bk1"/></svg><svg class="b"><use href="#bk2"/></svg><svg class="b"><use href="#join"/></svg><svg class="b"><use href="#cha"/></svg><svg class="b"><use href="#fil"/></svg><svg class="b"><use href="#bln"/></svg><svg class="b"><use href="#exp"/></svg>
    </div>
    <div class="vt vtr2">
      <svg class="b"><use href="#d1"/></svg><svg class="b"><use href="#d2"/></svg><svg class="b"><use href="#d3"/></svg><svg class="b"><use href="#d4"/></svg><hr>
      <svg class="b"><use href="#abc"/></svg><svg class="b"><use href="#drw"/></svg>
    </div>
  </aside>
</main>

<section class="dimrow">
  <div class="tb w640">
    <svg class="b"><use href="#dl"/></svg><svg class="b"><use href="#da"/></svg><svg class="b"><use href="#darc"/></svg><svg class="b"><use href="#dord"/></svg><u></u>
    <svg class="b"><use href="#drad"/></svg><svg class="b"><use href="#djog"/></svg><svg class="b"><use href="#ddia"/></svg><svg class="b"><use href="#dang"/></svg><u></u>
    <svg class="b"><use href="#dq"/></svg><svg class="b"><use href="#dbase"/></svg><svg class="b"><use href="#dcont"/></svg><svg class="b"><use href="#dspc"/></svg><svg class="b"><use href="#dbrk"/></svg><u></u>
    <svg class="b"><use href="#dtol"/></svg><svg class="b"><use href="#dcen"/></svg><svg class="b"><use href="#dins"/></svg><svg class="b"><use href="#djl"/></svg><u></u>
    <svg class="b"><use href="#dedt"/></svg><svg class="b"><use href="#dtxt"/></svg><svg class="b"><use href="#dupd"/></svg>
    <div class="cb c120 ctr isoc">ISO-25<i class="dd"></i></div>
    <svg class="b"><use href="#dims"/></svg>
  </div>
</section>

<section class="cmd">
  <div class="cmdside"><i class="cdots"></i><b>✕</b><svg viewBox="0 0 20 20" class="wrench"><path d="M3 3c3-2 6 0 5 3l9 9c1 2-1 3-2 2L6 9C3 10 1 7 3 4l3 3 2-2z" fill="#f0f0f0"/></svg></div>
  <div class="cmdmain">
    <div class="cmdlog"><p>命令: 指定对角点或 [栏选(F)/圈围(WP)/圈交(CP)]:</p><p>命令: *取消*</p></div>
    <div class="cmdin"><span class="prompt">&gt;_</span><i class="dd gr"></i><em>键入命令</em></div>
  </div>
</section>

<footer class="status">
  <span class="coords">5205.1662, 743.3832, 0.0000</span>
  <div class="sbs">
    <svg class="sb" viewBox="0 0 20 20"><path d="M10 2v16M2 10h16" stroke="#222" stroke-width="1.500"/><path d="M7 7h6v6H7z" fill="#666"/><path d="M15 15h4v4h-4z" fill="#3a8fd8"/></svg>
    <svg class="sb" viewBox="0 0 20 20"><path d="M3 3h14v14H3z" fill="none" stroke="#222" stroke-dasharray="1 2"/><path d="M7 6v9M10 6v9M13 6v9" stroke="#222" stroke-dasharray="1 2"/></svg>
    <svg class="sb" viewBox="0 0 20 20"><path d="M2 2h16v16H2z" fill="#ddd" stroke="#222"/><path d="M6 2v16M10 2v16M14 2v16M2 6h16M2 10h16M2 14h16" stroke="#222"/></svg>
    <svg class="sb on" viewBox="0 0 20 20"><path d="M3 2v15h15M3 11h6v6" fill="none" stroke="#333"/></svg>
    <svg class="sb" viewBox="0 0 20 20"><path d="M2 16h14L8 8" fill="none" stroke="#333"/><circle cx="9" cy="10" r="5" fill="none" stroke="#555" stroke-dasharray="2 1"/></svg>
    <svg class="sb on" viewBox="0 0 20 20"><path d="M4 3h14v15H4z" fill="#fff" stroke="#444"/><circle cx="3" cy="3" r="2" fill="#fff" stroke="#e8601c"/></svg>
    <svg class="sb" viewBox="0 0 20 20"><path d="M5 5l3-3h10v12l-3 3H5z" fill="#eee" stroke="#444"/><circle cx="3" cy="17" r="2" fill="#fff" stroke="#e8601c"/></svg>
    <svg class="sb on" viewBox="0 0 20 20"><path d="M3 17h14M3 17l10-10" fill="none" stroke="#222"/></svg>
    <svg class="sb on" viewBox="0 0 20 20"><path d="M3 2v15h15M3 17l7-7" fill="none" stroke="#222"/><path d="M14 2l-3 6h3l-2 5 5-7h-3l2-4z" fill="#e8902a"/></svg>
    <svg class="sb" viewBox="0 0 20 20"><path d="M6 4v10M2 9h16" stroke="#222" stroke-width="1.500"/><path d="M9 10h7v4H9z" fill="#fff" stroke="#222"/></svg>
    <svg class="sb" viewBox="0 0 20 20"><path d="M10 2v16M2 10h16" stroke="#111" stroke-width="2"/></svg>
    <svg class="sb on2" viewBox="0 0 20 20"><path d="M2 2h16v16H2z" fill="#8ab8e8" stroke="#345"/><path d="M4 4h12v12H4z" fill="#b8d4f0"/></svg>
    <svg class="sb" viewBox="0 0 20 20"><path d="M5 2h10v16H5z" fill="#fff" stroke="#222"/><path d="M7 4h6v3H7zM7 9h2v2H7zM11 9h2v2h-2zM7 13h2v2H7zM11 13h2v2h-2z" fill="#333"/></svg>
    <svg class="sb" viewBox="0 0 20 20"><path d="M1 5h6M4 2v6" stroke="#222"/><path d="M5 8h8v8H5z" fill="#fff" stroke="#222"/><path d="M10 11h8v8h-8z" fill="#6cae4a" stroke="#2a6a20"/></svg>
    <svg class="sb" viewBox="0 0 20 20"><path d="M7 2h6v5h5v6h-5v5H7v-5H2V7h5z" fill="#f2f2f2" stroke="#333"/></svg>
  </div>
  <div class="sright">
    <span class="sbl">模型</span>
    <svg class="sr" viewBox="0 0 20 20"><path d="M3 2h14v14H3z" fill="#fff" stroke="#222"/><path d="M6 13V5l6 8z" fill="none" stroke="#222"/><path d="M2 18h16" stroke="#222" stroke-width="1.500"/></svg>
    <svg class="sr" viewBox="0 0 20 20"><path d="M2 2h7v9H2zM11 2h7v9h-7z" fill="#fff" stroke="#222"/><path d="M2 14h16M2 17h16" stroke="#222" stroke-width="1.300"/></svg>
    <span class="sgap"></span>
    <svg class="sr" viewBox="0 0 20 20"><path d="M10 1l2 9 6 7-8-3-8 3 6-7z" fill="#f2f2f2" stroke="#333"/></svg>
    <span class="scale">1:1</span><i class="dd bk"></i>
    <svg class="sr" viewBox="0 0 20 20"><path d="M9 1l2 9 5 7-7-3-7 3 5-7z" fill="#f2f2f2" stroke="#333"/><circle cx="14" cy="10" r="3" fill="#f5a020"/></svg>
    <svg class="sr" viewBox="0 0 20 20"><path d="M9 1l2 9 5 7-7-3-7 3 5-7zM6 4l8 12" fill="none" stroke="#777"/></svg>
    <span class="sgap2"></span>
    <svg class="sr" viewBox="0 0 20 20"><circle cx="10" cy="10" r="7" fill="none" stroke="#222" stroke-width="2.500" stroke-dasharray="3 1.500"/><circle cx="10" cy="10" r="4" fill="#ddd" stroke="#222"/></svg>
    <svg class="sr" viewBox="0 0 20 20"><path d="M2 8h10v11H2z" fill="#fff" stroke="#222"/><path d="M7 8V4c0-4 8-4 8 0v3" fill="none" stroke="#222" stroke-width="1.500"/></svg>
    <svg class="sr" viewBox="0 0 20 20"><path d="M1 4h14v10H1z" fill="#bbb" stroke="#222"/><circle cx="14" cy="13" r="4" fill="#6cb4ee" stroke="#fff"/></svg>
    <svg class="sr bulb" viewBox="0 0 20 20"><path d="M10 1c5 0 7 4 5 8l-3 5H8L5 9C3 5 5 1 10 1z" fill="#f7e27a" stroke="#887a20"/><path d="M8 15h4v3H8z" fill="#555"/></svg>
    <i class="dd bk lastdd"></i>
    <svg class="sr" viewBox="0 0 20 20"><path d="M2 2h16v17H2z" fill="#fff" stroke="#222"/><path d="M2 2h16v3H2z" fill="#9ba3ab"/></svg>
  </div>
</footer>

<div class="wm" aria-hidden="true">
  <svg class="paw" viewBox="0 0 80 90"><ellipse cx="16" cy="36" rx="9" ry="13" transform="rotate(-18 16 36)"/><ellipse cx="32" cy="14" rx="7" ry="14"/><ellipse cx="54" cy="14" rx="7" ry="14"/><ellipse cx="70" cy="36" rx="9" ry="13" transform="rotate(18 70 36)"/><path d="M42 38c10 0 18 16 26 22 8 8 4 26-10 26-8 0-10-3-16-3s-9 3-17 3C12 86 6 68 16 60c8-6 16-22 26-22z"/></svg>
  <span class="wmb">Bai</span><span class="wmdu">du</span><span class="wmj">经验</span>
  <span class="wml">jingyan.baidu.com</span>
</div>
</body>
</html>
```
FILE: styles.css
```css
*{box-sizing:border-box}
html,body{margin:0;padding:0}
body{width:1280px;height:983px;overflow:hidden;background:#636363;position:relative;display:flex;flex-direction:column;font-family:"Noto Sans CJK SC","Liberation Sans",sans-serif;font-size:12px;color:#222}
i,u,b,em{display:block;text-decoration:none;font-style:normal}
.defs{position:absolute;width:0;height:0}
svg.b{flex:none;display:block;width:23.4px;height:18px}

.titlebar{height:24px;flex:none;display:flex;align-items:center;background:linear-gradient(#b3b3b3,#9a9a9a 45%,#7c7c7c);position:relative;padding-left:46px;border-bottom:1px solid #444}
.appbtn{position:absolute;left:0;top:0;width:41px;height:40px;background:linear-gradient(#a6a6a6,#7d7d7d);border-right:1px solid #555;border-bottom:1px solid #444;z-index:3}
.applogo{position:absolute;left:4px;top:4px;width:26px;height:32px}
.appdd{position:absolute;right:3px;top:18px;border:4px solid transparent;border-top:5px solid #222}
.qat{display:flex;align-items:center;width:228px;flex:none}
.qat svg.b{width:24px}
.dd{flex:none;width:0;height:0;border:4.500px solid transparent;border-top:5px solid #111;border-bottom:0;margin-left:auto}
.dd.gr{border-top-color:#888}
.dd.bk{border-top-color:#111}
.dd.sm{margin:0 2px;border-width:4px;border-bottom:0;border-top-color:#777}
.qat .dd{margin:0 2.500px;border-width:3.500px;border-bottom:0;border-top-color:#555}
.wscombo{width:178px;height:21px;flex:none;display:flex;align-items:center;background:linear-gradient(#e9e9e9,#bcbcbc);border:1px solid #666;color:#111;font-size:13px;padding:0 3px}
.wsgear{width:18px;height:18px;flex:none;margin-right:2px}
.wscombo .dd{border-top-color:#555}
.tarrow{width:16px;height:21px;flex:none;margin-left:1px;display:flex;align-items:center;justify-content:center;background:linear-gradient(#bbb,#888);border:1px solid #555}
.tarrow .dd{margin:0}
.glass{width:247px;height:23px;flex:none;display:flex;gap:17px;padding-left:31px;align-items:center;background:linear-gradient(100deg,#12458f,#2f7fcb 30%,#1a66b5 60%,#0c4d9b 90%);color:#e8eef5;font:12.500px "Liberation Sans",sans-serif;border-bottom:2px solid #bcd4ea}
.tarrow2{width:12px;height:23px;flex:none;background:linear-gradient(#a3a3a3,#6f6f6f);position:relative}
.tarrow2::after{content:"";position:absolute;left:3px;top:7px;border:5px solid transparent;border-left:6px solid #111;border-right:0}
.search{width:178px;height:21px;flex:none;background:#fff;font-size:12px;font-style:italic;color:#777;padding-left:3px;line-height:22px;overflow:hidden}
.infocenter{width:252px;height:23px;flex:none;display:flex;align-items:center;background:linear-gradient(#a6a6a6,#8a8a8a);padding-left:4px}
.ib{width:20px;height:20px;flex:none}
.ib + .ib{margin-left:4px}
.login{color:#eee;font-size:12px;margin-left:2px;width:94px}
.infocenter .dd{margin:0 5px 0 4px;border-width:3.500px;border-bottom:0;border-top-color:#555}
.infocenter .d1{margin-right:9px}
.ib.x1{margin-left:0}
.ib.hp{margin-left:10px;width:22px;height:22px}
.winctl{flex:1;height:23px;display:flex;padding-left:16px;background:linear-gradient(90deg,#2a6bb0,#6aa5d8 40%,#1a5fa8);color:#fff}
.wb{width:27px;height:19px;border:1px solid #cfdde8;border-top:0;background:linear-gradient(rgba(255,255,255,.25),rgba(255,255,255,.05));display:flex;align-items:center;justify-content:center;font:700 12px "Liberation Sans",sans-serif;border-radius:0 0 3px 3px}
.wb.wx{width:49px}
.wmin{width:10px;height:4px;background:#fff;margin-top:6px}
.wmax{width:11px;height:11px;border:2px solid #fff}

.menubar{height:21px;flex:none;display:flex;align-items:center;gap:24.500px;padding:0 0 2px 55px;background:linear-gradient(#4c4c4c,#6a6a6a 40%,#8b8b8b);color:#e9e9e9;font-size:12px;position:relative}
.menubar>span{flex:none}
.mdi{position:absolute;right:5px;top:3px;display:flex;align-items:center;gap:4px;color:#eee;font:700 13px "Liberation Sans",sans-serif}
.mmin{width:10px;height:2px;background:#eee;margin-top:9px}
.mmax{width:12px;height:12px;border:1.500px solid #eee;margin-left:0}

.rows{flex:none;display:flex;flex-direction:column;gap:3px;padding:0 0 0 2px;height:105px}
.row{display:flex;gap:4px;height:24px;flex:none}
.r3{gap:2px}
.r3 svg.b{width:23px}
.tb{height:24px;flex:none;display:flex;align-items:center;background:#efefef;border:1px solid #3a3a3a;padding-left:6px;position:relative}
.tb::before{content:"";position:absolute;left:0;top:0;bottom:0;width:6px;background:#4a4a4a radial-gradient(circle,#999 .7px,transparent 1px) 0 0/3px 3px}
.tb.nohandle{padding-left:6px;background:#dcdcdc}
.tb.nohandle::before{display:none}
.tb u{flex:none;width:1px;height:18px;background:#aaa;margin:0 2.300px}
.w644{width:644px}.w596{width:596px}.w228{width:228px}.w399{width:399px}.w574{width:578px}.w531{width:531px}.w486{width:486px}.w158{width:158px}.w470{width:470px}.w640{width:640px}
.cb{flex:none;height:20px;border:1px solid #b3b3b3;border-radius:3px;background:linear-gradient(#f7f7f7,#d2d2d2);display:flex;align-items:center;padding:0 4px;font:13px "Liberation Sans","Noto Sans CJK SC",sans-serif;color:#222;letter-spacing:.2px}
.cb .dd{margin-left:auto}
.cb.ctr{justify-content:center;position:relative;padding-right:32px}
.cb.ctr.isoc{padding-right:46px}
.cb.ctr .dd{position:absolute;right:3px;top:7px}
.c118{width:118px}.c120{width:120px}.c119{width:119px}.c174{width:174px;margin-left:1px;padding-left:8px}.c298{width:298px}.c148{width:148px}.c157{width:157px}.c123{width:123px}.c138{width:138px}
.cmbs u{margin:0 3px 0 4px}
.cmbs svg.b{width:22px}
.lay{gap:2px;padding-left:3px}
.lay .s{width:14px;height:18px;flex:none}
.lay span{font-size:12px;margin-left:1px}
.sw{width:10px;height:10px;background:#fff;border:1px solid #111;flex:none}
.sm2{margin-right:3px;margin-left:0}
.ser{font:11px "Liberation Mono","Liberation Serif",monospace;letter-spacing:-.2px}
.lt{height:1px;background:#222;flex:none;margin-right:6px}
.lt1{width:60px}.lt2{width:34px}
.dis{color:#888;background:#eee}
.flat{background:#f4f4f4;border-color:#ccc}
.cprops u{margin:0 3.500px}

.main{height:713px;flex:none;display:flex;margin-top:5px}
.vt{display:flex;flex-direction:column;align-items:center;background:#ededed;border:1px solid #3a3a3a;padding-top:8px;position:relative;width:24px}
.vt::before{content:"";position:absolute;left:0;right:0;top:0;height:7px;background:#4a4a4a radial-gradient(circle,#aaa .7px,transparent 1px) 0 0/3px 3px}
.vt svg.b{width:22px;height:19px;margin-bottom:3px}
.vtl{margin-left:1px;height:448px;flex:none}
.center{width:1218px;margin-left:5px;flex:none;display:flex;flex-direction:column;border-left:2px solid #a4a4a4;height:713px}
.viewrow{height:697px;display:flex;flex:none;margin-left:-1px}
.canvas{width:1199px;height:697px;display:block;background:#212830;flex:none}
.vlabel{font:12px "Noto Sans CJK SC",sans-serif;fill:#ccd}
.cube{font:15px "Noto Sans CJK SC",sans-serif;fill:#4a4a4a}
.cube.big{font-size:19px}
.ringt{font:16px "Noto Sans CJK SC",sans-serif;fill:#c8c8c8}
.unnamed{font:10.500px "Noto Sans CJK SC",sans-serif;fill:#6d7182;letter-spacing:1.500px}
.vscroll{flex:1;background:#eee;border-right:2px solid #fff;position:relative}
.tri{position:absolute;left:4px;width:0;height:0;border:4px solid transparent}
.tri.up{top:5px;border-bottom:5px solid #444;border-top:0}
.tri.dn{bottom:6px;border-top:5px solid #444;border-bottom:0}
.vthumb{position:absolute;top:657px;left:1px;width:14px;height:16px;background:linear-gradient(90deg,#f4f4f4,#d0d0d0);border:1px solid #aaa}
.tabbar{height:16px;flex:none;display:flex;align-items:flex-start;background:#f2f2f2;border-bottom:2px solid #fff;margin-left:-1px;position:relative;border-top:1px solid #555;font-size:12px;padding-left:2px}
.nav{display:flex;width:59px;flex:none;height:15px;padding-top:1px}
.na{width:13px;height:12px;margin-right:1px;background:#ddd;border:1px solid #bbb;position:relative}
.na::after{content:"";position:absolute;top:1px;left:3px;border:4px solid transparent}
.na.l1::after,.na.l2::after{border-right:5px solid #333;border-left:0}
.na.r1::after,.na.r2::after{border-left:5px solid #333;border-right:0}
.tab{flex:none;height:15px;line-height:15px;padding:0;margin-right:16px;color:#222;position:relative}
.tab::after{content:"";position:absolute;right:-8px;top:1px;width:1px;height:14px;background:#444;transform:rotate(20deg)}
.tab.on{background:#2c3440;color:#fff;width:42px;text-align:center;margin-right:4px;clip-path:polygon(5px 0,100% 0,calc(100% - 6px) 100%,0 100%)}
.tab.on::after{display:none}
.hs{position:absolute;left:797px;right:2px;top:0;height:14px;background:#eaeaea}
.hbtn{position:absolute;top:1px;width:15px;height:12px;background:linear-gradient(#f5f5f5,#cfcfcf);border:1px solid #aaa}
.hbtn.l{left:0}.hbtn.r{right:18px}
.hbtn::after{content:"";position:absolute;left:4px;top:1px;border:4px solid transparent}
.hbtn.l::after{border-right:4px solid #333;border-left:0}
.hbtn.r::after{border-left:4px solid #333;border-right:0}
.hthumb{position:absolute;left:205px;top:0;width:14px;height:14px;background:linear-gradient(#f6f6f6,#c6c6c6);border:1px solid #aaa}
.rcol{margin-left:4px;width:24px;flex:none;display:flex;flex-direction:column;gap:5px}
.vtr1{height:403px;flex:none}
.vtr2{height:143px;flex:none}
.vtr2 hr{width:20px;border:0;border-top:1px solid #aaa;margin:0 0 7px}

.dimrow{height:24px;flex:none;margin-top:5px;padding-left:30px}
.dimrow .tb svg.b{width:23px}
.dimrow .cb{margin-left:5px}

.cmd{height:58px;flex:none;margin-top:7px;display:flex;border-bottom:1px solid #222}
.cmdside{width:22px;flex:none;background:#565656;display:flex;flex-direction:column;align-items:center;position:relative;color:#eee}
.cdots{height:6px;width:100%;background:#777 radial-gradient(circle,#bbb .8px,transparent 1px) 0 0/3px 3px}
.cmdside b{font:700 14px "Liberation Sans",sans-serif;margin-top:7px}
.wrench{width:18px;height:18px;margin-top:6px}
.cmdmain{flex:1;display:flex;flex-direction:column}
.cmdlog{height:34px;background:#c4c4c4;padding:2px 0 0 4px;border-bottom:1px solid #777;font:12px/16px "Liberation Mono","Noto Sans CJK SC",monospace;letter-spacing:.6px;color:#111}
.cmdlog p{margin:0;white-space:pre}
.cmdin{flex:1;background:#fff;display:flex;align-items:center;padding-left:6px;gap:3px}
.prompt{width:15px;height:15px;border:1px solid #889;background:#e6e6e6;font:9px "Liberation Mono",monospace;line-height:13px;text-align:center;color:#222;border-radius:2px}
.cmdin .dd{margin:0 5px 0 1px;border-width:3px;border-bottom:0}
.cmdin em{font-style:italic;color:#999;font-size:13px;letter-spacing:1px}

.status{height:21px;flex:none;display:flex;align-items:center;background:linear-gradient(#6e6e6e,#949494 40%,#a4a4a4);padding-left:11px;position:relative}
.coords{font:11px "Liberation Mono",monospace;width:201px;flex:none;color:#222;letter-spacing:-.6px;padding-top:2px}
.sbs{display:flex;width:333px;flex:none}
.sb{width:22.600px;height:21px;padding:1px 2px;border-left:1px solid #777;background:linear-gradient(#aaa,#bbb);flex:none}
.sb.on{background:linear-gradient(#8fbcc9,#cfe4ea 45%,#9ac6d3)}
.sb.on2{background:#bbb}
.sright{margin-left:auto;display:flex;align-items:center;height:21px;width:328px}
.sbl{font-size:12px;color:#111;width:31px;border-left:1px solid #777;padding-left:1px;flex:none}
.sr{width:20px;height:19px;flex:none;border-left:0}
.sgap{width:21px;height:21px;background:#888;flex:none;margin:0 0 0 1px}
.sgap2{width:7px;flex:none}
.scale{font:12px "Liberation Mono",monospace;color:#111;margin:0 1px;letter-spacing:-.5px}
.sright .dd{margin:0 4px 4px 1px}
.sright .lastdd{margin:0 5px 0 6px}
.bulb{background:#7d7d7d;width:26px}

.wm{position:absolute;left:980px;top:848px;width:240px;height:110px;pointer-events:none;color:rgba(255,255,255,.62)}
.paw{position:absolute;left:78px;top:0;width:70px;height:70px;fill:rgba(255,255,255,.62)}
.wmb{position:absolute;left:3px;top:19px;font:700 51px/60px "Liberation Sans",sans-serif}
.wmdu{position:absolute;left:98px;top:38px;font:700 26px/32px "Liberation Sans",sans-serif;color:#666}
.wmj{position:absolute;left:151px;top:25px;font:700 37px/48px "Noto Sans CJK SC",sans-serif}
.wml{position:absolute;left:2px;top:74px;font:27px/34px "Liberation Sans",sans-serif;color:rgba(255,255,255,.85);text-shadow:0 0 2px #999;letter-spacing:.7px}
```
